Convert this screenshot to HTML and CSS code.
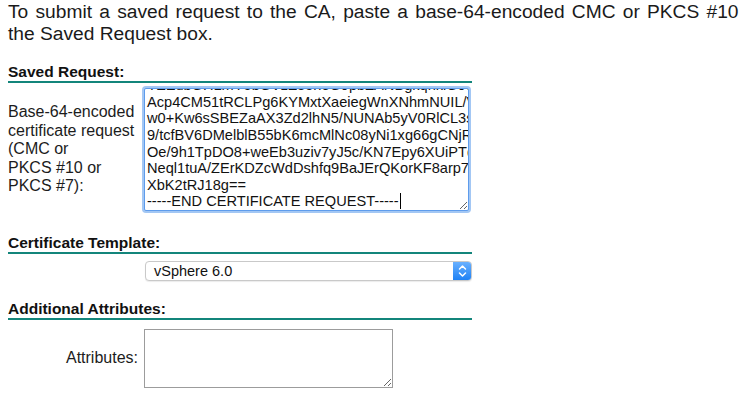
FILE: index.html
```html
<!DOCTYPE html>
<html>
<head>
<meta charset="utf-8">
<link rel="stylesheet" href="styles.css">
</head>
<body>
<div class="page">
  <p class="intro"><span class="intro-first">To submit a saved request to the CA, paste a base-64-encoded CMC or PKCS #10 certificate request or PKCS #7 renewal request generated by an external source (such as a Web server) in</span><br>the Saved Request box.</p>

  <h2 class="head head-first">Saved Request:</h2>
  <div class="row row-req">
    <div class="label">Base-64-encoded<br>certificate request<br>(CMC or<br>PKCS #10 or<br>PKCS #7):</div>
    <div class="reqbox">
      <div class="line">YZEubGHLmY5bGVzZ35neG9pbZANBgkqhkiG9w0BAQsFAAOCAQEA</div>
      <div class="line">Acp4CM51tRCLPg6KYMxtXaeiegWnXNhmNUIL/Vx2Qw</div>
      <div class="line">w0+Kw6sSBEZaAX3Zd2lhN5/NUNAb5yV0RlCL3sTm</div>
      <div class="line">9/tcfBV6DMelblB55bK6mcMlNc08yNi1xg66gCNjR</div>
      <div class="line">Oe/9h1TpDO8+weEb3uziv7yJ5c/KN7Epy6XUiPTqW</div>
      <div class="line">Neql1tuA/ZErKDZcWdDshfq9BaJErQKorKF8arp7Yh</div>
      <div class="line">XbK2tRJ18g==</div>
      <div class="line">-----END CERTIFICATE REQUEST-----<span class="caret"></span></div>
    </div>
  </div>

  <h2 class="head head-next">Certificate Template:</h2>
  <div class="row row-select">
    <div class="select">
      <span class="select-text">vSphere 6.0</span>
      <span class="select-arrow">
        <svg width="19" height="20" viewBox="0 0 19 20"><path d="M6.5 8 L9.5 5 L12.5 8" fill="none" stroke="#fff" stroke-width="1.5" stroke-linecap="round" stroke-linejoin="round"/><path d="M6.5 12 L9.5 15 L12.5 12" fill="none" stroke="#fff" stroke-width="1.5" stroke-linecap="round" stroke-linejoin="round"/></svg>
      </span>
    </div>
  </div>

  <h2 class="head head-third">Additional Attributes:</h2>
  <div class="row row-attr">
    <div class="label label-right">Attributes:</div>
    <textarea class="attrbox"></textarea>
  </div>
</div>
</body>
</html>
```

FILE: styles.css
```css
html, body {
  margin: 0;
  padding: 0;
  background: #ffffff;
  overflow: hidden;
}
body {
  font-family: "Liberation Sans", Arial, sans-serif;
  color: #1c1c1c;
  width: 740px;
  height: 400px;
}
.page {
  padding-left: 8px;
  width: 464px;
}
.intro {
  margin: 0;
  padding-top: 1px;
  font-size: 19.2px;
  line-height: 21.5px;
  white-space: nowrap;
  color: #1a1a1a;
}
.intro-first {
  word-spacing: 1.9px;
}
.head {
  margin: 0;
  font-size: 15.5px;
  font-weight: bold;
  line-height: 18px;
  color: #111;
  border-bottom: 2px solid #13857b;
}
.head-first { margin-top: 19px; }
.head-next { margin-top: 23px; }
.head-third { margin-top: 19px; }

.row {
  display: flex;
  align-items: center;
}
.row-req { margin-top: 5px; }
.row-select { margin-top: 7px; }
.row-attr { margin-top: 9px; }

.label {
  width: 136px;
  flex: none;
  font-size: 16px;
  line-height: 18.5px;
  color: #1c1c1c;
}
.label-right {
  text-align: right;
  padding-right: 6px;
  box-sizing: border-box;
}

.reqbox {
  box-sizing: border-box;
  width: 325px;
  height: 123px;
  border: 1px solid #5e9cec;
  box-shadow: 0 0 0 2px #a3c7f4;
  border-radius: 2px;
  padding: 0 3px 0 2px;
  display: flex;
  flex-direction: column;
  justify-content: flex-end;
  overflow: hidden;
  resize: both;
  font-size: 14.6px;
  line-height: 16.6px;
  color: #111;
  background: #fff;
}
.line {
  white-space: nowrap;
  flex: none;
}
.caret {
  display: inline-block;
  width: 0;
  height: 16px;
  border-right: 1px solid #000;
  vertical-align: -3px;
  margin-left: 1px;
}

.select {
  margin-left: 137px;
  box-sizing: border-box;
  width: 327px;
  height: 20px;
  border: 1px solid #c9c9c9;
  border-radius: 4px;
  background: #fff;
  box-shadow: 0 1px 1px rgba(0,0,0,0.08);
  display: flex;
  align-items: center;
  overflow: hidden;
}
.select-text {
  flex: 1;
  padding-left: 8px;
  font-size: 14.5px;
  line-height: 18px;
  color: #111;
}
.select-arrow {
  flex: none;
  width: 19px;
  height: 20px;
  margin: -1px -1px -1px 0;
  background: linear-gradient(#6db3ff, #1b7ff4);
  border-radius: 0 4px 4px 0;
  display: flex;
}

.attrbox {
  box-sizing: border-box;
  width: 249px;
  height: 59px;
  margin: 0;
  border: 1px solid #9c9c9c;
  border-radius: 0;
  background: #fff;
  padding: 2px;
  font-family: "Liberation Sans", Arial, sans-serif;
  font-size: 14px;
}
```
